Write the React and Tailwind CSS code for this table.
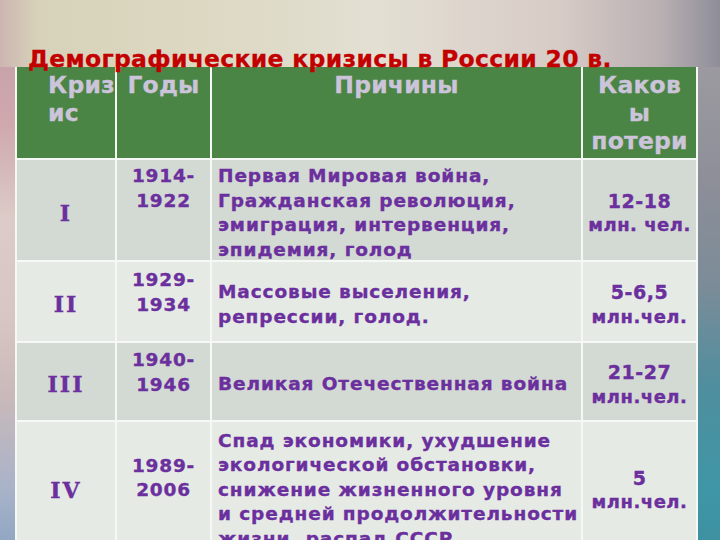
import React from "react";

const F = "font-['DejaVu_Sans',Verdana,sans-serif]";

function HeadCell({ children, className = "" }) {
  return (
    <div className={`bg-[#4b8545] text-[#cbc4da] text-[23.5px] leading-[28px] font-bold tracking-[0.2px] pt-[4px] [-webkit-text-stroke:0.3px_#cbc4da] ${className}`}>
      {children}
    </div>
  );
}

function Cell({ children, className = "", alt }) {
  return (
    <div
      className={`${alt ? "bg-[#e5eae5]" : "bg-[#d3d9d3]"} text-[#6b2f9e] leading-[24.5px] font-bold flex flex-col justify-center whitespace-nowrap pt-[6px] [-webkit-text-stroke:0.35px_#6b2f9e] ${className}`}
    >
      {children}
    </div>
  );
}

const rows = [
  {
    n: "I",
    y: ["1914-", "1922"],
    ypad: "pb-[49px]",
    c: ["Первая Мировая война,", "Гражданская революция,", "эмиграция, интервенция,", "эпидемия, голод"],
    l: ["12-18", "млн. чел."],
  },
  {
    n: "II",
    y: ["1929-", "1934"],
    ypad: "pb-[24px]",
    c: ["Массовые выселения,", "репрессии, голод."],
    l: ["5-6,5", "млн.чел."],
  },
  {
    n: "III",
    y: ["1940-", "1946"],
    ypad: "pb-[24px]",
    c: ["Великая Отечественная война"],
    l: ["21-27", "млн.чел."],
  },
  {
    n: "IV",
    y: ["1989-", "2006"],
    ypad: "pb-[24px]",
    c: [
      "Спад экономики, ухудшение",
      "экологической обстановки,",
      "снижение жизненного уровня",
      "и средней продолжительности",
      "жизни, распад СССР",
    ],
    l: ["5", "млн.чел."],
  },
];

export default function App() {
  return (
    <div className={`w-[720px] h-[540px] overflow-hidden flex flex-col ${F} bg-[#d9cfc8]`}>
      <div className="h-[67px] shrink-0 flex items-end pl-[28px] bg-[linear-gradient(90deg,#cdb5b2_0px,#d7d3ba_40px,#dcd8c2_200px,#e3dfd3_380px,#d7cbc6_560px,#b9b0b2_660px,#8e8e98_720px)]">
        <div className="text-[#c20000] text-[23.5px] leading-[26px] font-bold tracking-[0.3px] whitespace-nowrap -mb-[5px] relative z-10 [-webkit-text-stroke:0.3px_#c20000]">
          Демографические кризисы в России 20 в.
        </div>
      </div>
      <div className="flex flex-1 min-h-0">
        <div className="w-[15px] shrink-0 bg-[linear-gradient(180deg,#c9a3aa_0px,#cfa9ae_60px,#dccbc6_150px,#d8c6c2_250px,#c9b9ba_330px,#a9b3c9_420px,#8fa5c2_480px,#b0c2d6_540px)]" />
        <div className="w-[683px] shrink-0 self-start grid grid-cols-[98px_93px_369px_113px] grid-rows-[91px_100px_79px_77px_130px] gap-[2px] p-[2px] pt-0 bg-[#f6f8f6]">
          <HeadCell className="pl-[31px] whitespace-nowrap">
            Криз
            <br />
            ис
          </HeadCell>
          <HeadCell className="text-center">Годы</HeadCell>
          <HeadCell className="text-center">Причины</HeadCell>
          <HeadCell className="text-center">
            Каков
            <br />ы<br />
            потери
          </HeadCell>
          {rows.map((r, i) => {
            const alt = i % 2 === 1;
            return (
              <React.Fragment key={i}>
                <Cell alt={alt} className="items-center">
                  <span className="font-['DejaVu_Serif',serif] text-[22px] tracking-[2px]">{r.n}</span>
                </Cell>
                <Cell alt={alt} className={`items-center text-center text-[18.5px] tracking-[0.8px] ${r.ypad}`}>
                  {r.y.map((t, k) => (
                    <div key={k}>{t}</div>
                  ))}
                </Cell>
                <Cell alt={alt} className="pl-[6px] text-[18.5px] tracking-[0.9px]">
                  {r.c.map((t, k) => (
                    <div key={k}>{t}</div>
                  ))}
                </Cell>
                <Cell alt={alt} className="items-center text-center text-[18px] tracking-[0.5px]">
                  {r.l.map((t, k) => (
                    <div key={k} className={k === 0 ? "text-[19px]" : ""}>
                      {t}
                    </div>
                  ))}
                </Cell>
              </React.Fragment>
            );
          })}
        </div>
        <div className="flex-1 bg-[linear-gradient(180deg,#9c9aa0_0px,#8c8e98_120px,#7b8c98_220px,#4f8e9e_320px,#3f96a6_420px,#3b8c9c_540px)]" />
      </div>
    </div>
  );
}
